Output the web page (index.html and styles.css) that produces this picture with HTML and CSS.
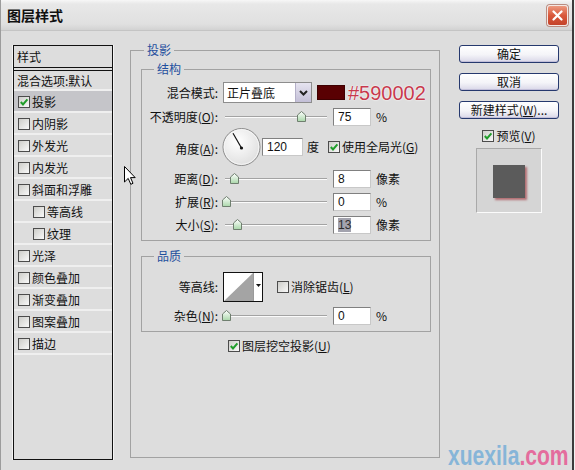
FILE: index.html
```html
<!DOCTYPE html>
<html lang="zh-CN">
<head>
<meta charset="utf-8">
<title>图层样式</title>
<link rel="stylesheet" href="styles.css">
</head>
<body>
<div class="window">
  <div class="titlebar">
    <span class="title">图层样式</span>
    <span class="close">
      <svg width="11" height="11" viewBox="0 0 11 11"><path d="M1.5 1.5 L9.5 9.5 M9.5 1.5 L1.5 9.5" stroke="#fff" stroke-width="2.2" stroke-linecap="round"/></svg>
    </span>
  </div>
  <div class="content">
    <div class="list">
      <div class="list-head">样式</div>
      <div class="list-blend">混合选项:默认</div>
      <div class="item sel"><span class="cb on"><svg viewBox="0 0 10 10"><path d="M1.8 5 L4 7.4 L8.4 2.4" fill="none" stroke="#1f9d2a" stroke-width="2"/></svg></span>投影</div>
      <div class="item"><span class="cb"></span>内阴影</div>
      <div class="item"><span class="cb"></span>外发光</div>
      <div class="item"><span class="cb"></span>内发光</div>
      <div class="item"><span class="cb"></span>斜面和浮雕</div>
      <div class="item sub"><span class="cb"></span>等高线</div>
      <div class="item sub"><span class="cb"></span>纹理</div>
      <div class="item"><span class="cb"></span>光泽</div>
      <div class="item"><span class="cb"></span>颜色叠加</div>
      <div class="item"><span class="cb"></span>渐变叠加</div>
      <div class="item"><span class="cb"></span>图案叠加</div>
      <div class="item"><span class="cb"></span>描边</div>
    </div>

    <fieldset class="group outer">
      <legend>投影</legend>
      <fieldset class="group inner">
        <legend>结构</legend>
        <div class="row r-blend">
          <span class="label">混合模式:</span>
          <div class="select">
            <span class="sel-text">正片叠底</span>
            <span class="sel-btn"><svg width="9" height="6" viewBox="0 0 9 6"><path d="M1 1 L4.5 4.5 L8 1" fill="none" stroke="#222" stroke-width="2"/></svg></span>
          </div>
          <span class="swatch"></span>
          <span class="hex">#590002</span>
        </div>
        <div class="row r-std">
          <span class="label">不透明度(<u>O</u>):</span>
          <div class="slider"><span class="thumb" style="left:75px"><svg width="9" height="11" viewBox="0 0 9 11"><defs><linearGradient id="tg1" x1="0" y1="0" x2="0" y2="1"><stop offset="0" stop-color="#ffffff"/><stop offset="1" stop-color="#a9d7a9"/></linearGradient></defs><path d="M4.5 0.5 L8.5 4 L8.5 10.5 L0.5 10.5 L0.5 4 Z" fill="url(#tg1)" stroke="#6f7f6f"/></svg></span></div>
          <span class="input">75</span>
          <span class="unit">%</span>
        </div>
        <div class="row r-angle">
          <span class="label">角度(<u>A</u>):</span>
          <span class="dial">
            <svg width="39" height="40" viewBox="0 0 39 40"><defs><radialGradient id="dg" cx="0.4" cy="0.35" r="0.7"><stop offset="0" stop-color="#ffffff"/><stop offset="1" stop-color="#dedede"/></radialGradient></defs><circle cx="19.5" cy="20" r="18.5" fill="url(#dg)" stroke="#8c8c8c"/><circle cx="19.5" cy="20" r="17.3" fill="none" stroke="#f6f6f6"/><path d="M19.5 21 L11 6.3" stroke="#111" stroke-width="1.2"/><circle cx="19.5" cy="21" r="1.6" fill="#111"/></svg>
          </span>
          <span class="input wide">120</span>
          <span class="unit deg">度</span>
          <span class="check global"><span class="cb on"><svg viewBox="0 0 10 10"><path d="M1.8 5 L4 7.4 L8.4 2.4" fill="none" stroke="#1f9d2a" stroke-width="2"/></svg></span>使用全局光(<u>G</u>)</span>
        </div>
        <div class="row r-std gap4">
          <span class="label">距离(<u>D</u>):</span>
          <div class="slider"><span class="thumb" style="left:8px"><svg width="9" height="11" viewBox="0 0 9 11"><path d="M4.5 0.5 L8.5 4 L8.5 10.5 L0.5 10.5 L0.5 4 Z" fill="url(#tg1)" stroke="#6f7f6f"/></svg></span></div>
          <span class="input">8</span>
          <span class="unit">像素</span>
        </div>
        <div class="row r-std">
          <span class="label">扩展(<u>R</u>):</span>
          <div class="slider"><span class="thumb" style="left:0px"><svg width="9" height="11" viewBox="0 0 9 11"><path d="M4.5 0.5 L8.5 4 L8.5 10.5 L0.5 10.5 L0.5 4 Z" fill="url(#tg1)" stroke="#6f7f6f"/></svg></span></div>
          <span class="input">0</span>
          <span class="unit">%</span>
        </div>
        <div class="row r-std">
          <span class="label">大小(<u>S</u>):</span>
          <div class="slider"><span class="thumb" style="left:11px"><svg width="9" height="11" viewBox="0 0 9 11"><path d="M4.5 0.5 L8.5 4 L8.5 10.5 L0.5 10.5 L0.5 4 Z" fill="url(#tg1)" stroke="#6f7f6f"/></svg></span></div>
          <span class="input"><span class="hl">13</span></span>
          <span class="unit">像素</span>
        </div>
      </fieldset>

      <fieldset class="group inner quality">
        <legend>品质</legend>
        <div class="row r-contour">
          <span class="label">等高线:</span>
          <span class="contour">
            <svg class="curve" width="29" height="28" viewBox="0 0 29 28"><polygon points="0,28 29,0 29,28" fill="#a4a4a4"/></svg>
            <span class="contour-btn"><svg width="5" height="3" viewBox="0 0 5 3"><polygon points="0,0 5,0 2.5,3" fill="#111"/></svg></span>
          </span>
          <span class="check anti"><span class="cb"></span>消除锯齿(<u>L</u>)</span>
        </div>
        <div class="row r-std">
          <span class="label">杂色(<u>N</u>):</span>
          <div class="slider"><span class="thumb" style="left:0px"><svg width="9" height="11" viewBox="0 0 9 11"><path d="M4.5 0.5 L8.5 4 L8.5 10.5 L0.5 10.5 L0.5 4 Z" fill="url(#tg1)" stroke="#6f7f6f"/></svg></span></div>
          <span class="input">0</span>
          <span class="unit">%</span>
        </div>
      </fieldset>

      <div class="knockout"><span class="check"><span class="cb on"><svg viewBox="0 0 10 10"><path d="M1.8 5 L4 7.4 L8.4 2.4" fill="none" stroke="#1f9d2a" stroke-width="2"/></svg></span>图层挖空投影(<u>U</u>)</span></div>
    </fieldset>

    <div class="side">
      <div class="btn">确定</div>
      <div class="btn">取消</div>
      <div class="btn">新建样式(<u>W</u>)...</div>
      <span class="check preview-check"><span class="cb on"><svg viewBox="0 0 10 10"><path d="M1.8 5 L4 7.4 L8.4 2.4" fill="none" stroke="#1f9d2a" stroke-width="2"/></svg></span>预览(<u>V</u>)</span>
      <div class="preview"><span class="preview-square"></span></div>
    </div>
  </div>
</div>

<svg class="cursor" width="12" height="19" viewBox="0 0 12 19"><path d="M0.5 0.5 L0.5 16 L4.2 12.4 L6.8 18.3 L9 17.3 L6.5 11.6 L11.2 11.6 Z" fill="#fff" stroke="#000"/></svg>
<div class="watermark"><span class="wm-a">xuexila</span><span class="wm-b">.com</span></div>
</body>
</html>
```

FILE: styles.css
```css
* { box-sizing: border-box; }
html, body { margin: 0; padding: 0; }
body {
  width: 575px;
  height: 470px;
  overflow: hidden;
  position: relative;
  background: #f2f2f2;
  font-family: "Noto Sans CJK SC", "Liberation Sans", sans-serif;
  font-size: 12px;
  line-height: 14px;
  color: #111;
}
u { text-decoration: underline; text-underline-offset: 1px; }

.window {
  width: 574px;
  height: 470px;
  background: #dddddd;
  border-left: 1px solid #9c9c9c;
  border-right: 2px solid #3c3c3c;
}

.titlebar {
  height: 31px;
  display: flex;
  align-items: center;
  justify-content: space-between;
  padding: 0 4px 0 6px;
  background: linear-gradient(#f7f7f7 0, #e8e8e8 4px, #e0e0e0 24px, #d2d2d2 30px);
  border-bottom: 1px solid #c4c4c4;
}
.title {
  font-size: 14px;
  font-weight: 700;
  line-height: 16px;
}
.close {
  width: 21px;
  height: 21px;
  border-radius: 3px;
  border: 1px solid #f4e8e4;
  background: linear-gradient(#ec9a80, #d9583b 50%, #c4432a);
  display: flex;
  align-items: center;
  justify-content: center;
  box-shadow: 0 0 0 1px #b98c80;
}

.content {
  display: flex;
  align-items: flex-start;
}

/* left list */
.list {
  margin: 14px 0 0 12px;
  width: 100px;
  height: 415px;
  border: 1px solid #111;
  background: #dddddd;
  box-shadow: -1px 0 0 #f4f4f4, 1px 0 0 #f4f4f4;
}
.list-head {
  height: 22px;
  padding-left: 3px;
  display: flex;
  align-items: center;
  border-bottom: 1px solid #111;
}
.list-blend {
  margin-top: 2px;
  height: 21px;
  padding: 1px 0 0 3px;
  display: flex;
  align-items: center;
  border-top: 1px solid #111;
  border-bottom: 2px solid #efefef;
}
.item {
  height: 22px;
  display: flex;
  align-items: center;
  padding: 1px 0 0 4px;
  border-bottom: 2px solid #efefef;
}
.item.sel { background: #c5c5c9; }
.item.sub { padding-left: 19px; }

.cb {
  width: 12px;
  height: 12px;
  flex: none;
  margin-right: 2px;
  border: 1px solid #4c4c4c;
  background: linear-gradient(135deg, #cdcdc9, #f9f9f9);
  display: inline-flex;
  align-items: center;
  justify-content: center;
}
.cb svg { width: 10px; height: 10px; display: block; }

.check {
  display: flex;
  align-items: center;
}

/* group boxes */
.group {
  margin: 0;
  border: 1px solid #a2a2a2;
  min-width: 0;
}
.group > legend {
  padding: 0 3px;
  line-height: 16px;
  color: #1f4f9e;
}
.outer {
  margin: 11px 0 0 17px;
  width: 310px;
  height: 416px;
  padding: 3px 8px 0 10px;
}
.outer > legend { margin-left: 3px; }
.inner {
  width: 290px;
  padding: 5px 0 6px 0;
}
.inner > legend { margin-left: 12px; }
.quality {
  margin-top: 7px;
  padding: 8px 0 6px 0;
}

.row {
  display: flex;
  align-items: center;
}
.label {
  width: 76px;
  flex: none;
  text-align: right;
  white-space: nowrap;
}
.r-blend { height: 21px; }
.r-std { height: 18px; margin-top: 5px; }
.r-std.gap4 { margin-top: 3px; }
.r-angle { height: 40px; margin-top: 1px; }
.r-angle .label { padding-top: 3px; }
.r-contour { height: 30px; }

.select {
  margin-left: 5px;
  width: 89px;
  height: 21px;
  border: 1px solid #8d8d8d;
  background: #fff;
  display: flex;
  align-items: center;
}
.sel-text { padding-left: 3px; }
.sel-btn {
  margin-left: auto;
  width: 16px;
  height: 19px;
  border-left: 1px solid #b4b0c8;
  background: linear-gradient(#e6e4f0, #c3bfd7);
  display: flex;
  align-items: center;
  justify-content: center;
}
.swatch {
  margin-left: 5px;
  width: 28px;
  height: 15px;
  background: #590002;
  box-shadow: inset 0 0 0 1px #3e0001;
}
.hex {
  margin-left: 3px;
  font-family: "Liberation Sans", Arial, sans-serif;
  font-size: 20px;
  line-height: 20px;
  color: #c7394d;
  text-shadow: 0 0 2px #fff, 0 0 1px #fff;
}

.slider {
  position: relative;
  width: 106px;
  height: 18px;
  margin-left: 4px;
  flex: none;
  background:
    linear-gradient(#a3a3a3, #a3a3a3) 3px 8px / 102px 1px no-repeat,
    linear-gradient(#fbfbfb, #fbfbfb) 3px 9px / 102px 1px no-repeat;
}
.thumb {
  position: absolute;
  top: 3px;
  width: 9px;
  height: 11px;
}
.thumb svg { display: block; }

.input {
  margin-left: 5px;
  width: 38px;
  height: 18px;
  flex: none;
  border: 1px solid #808080;
  border-right-color: #c8c8c8;
  border-bottom-color: #c8c8c8;
  background: #fff;
  font-family: "Liberation Sans", Arial, sans-serif;
  font-size: 12px;
  padding-left: 4px;
  display: flex;
  align-items: center;
}
.input.wide { margin-left: 1px; width: 41px; }
.hl { background: #a3a3ae; color: #2e2e2e; }
.unit { margin-left: 5px; }
.unit.deg { margin-left: 4px; }

.dial {
  margin-left: 4px;
  width: 39px;
  height: 40px;
  flex: none;
}
.dial svg { display: block; }
.global { margin-left: 9px; }

.contour {
  margin-left: 5px;
  width: 40px;
  height: 30px;
  flex: none;
  border: 1px solid #111;
  background: #fff;
  display: flex;
}
.curve { display: block; }
.contour-btn {
  width: 9px;
  border-left: 1px solid #9a9a9a;
  display: flex;
  justify-content: center;
  padding-top: 11px;
}
.contour-btn svg { display: block; }
.anti { margin-left: 14px; }

.knockout {
  margin-top: 7px;
  height: 14px;
  padding-left: 87px;
  display: flex;
  align-items: center;
}

/* right side */
.side {
  margin: 14px 0 0 19px;
  width: 100px;
  display: flex;
  flex-direction: column;
  align-items: center;
}
.btn {
  width: 100px;
  height: 18px;
  margin-bottom: 10px;
  border: 1px solid #26396e;
  border-radius: 3px;
  background: linear-gradient(#ffffff, #f4f4f8 55%, #d9d7e8);
  box-shadow: inset 0 -1px 0 #c2bfd9;
  display: flex;
  align-items: center;
  justify-content: center;
  white-space: nowrap;
}
.preview-check { height: 13px; }
.preview {
  margin-top: 6px;
  width: 66px;
  height: 65px;
  background: #d5d5d5;
  border: 1px solid;
  border-color: #a9a9a9 #fbfbfb #fbfbfb #a9a9a9;
  display: flex;
  align-items: center;
  justify-content: center;
}
.preview-square {
  width: 32px;
  height: 33px;
  margin-top: 2px;
  background: #5b5b5b;
  box-shadow: 2px 2px 2px rgba(150, 25, 35, 0.55);
}

/* overlays */
.cursor {
  position: absolute;
  left: 124px;
  top: 166px;
}
.watermark {
  position: absolute;
  right: 6px;
  bottom: 0px;
  font-family: "Liberation Sans", Arial, sans-serif;
  font-weight: 700;
  font-size: 27px;
  line-height: 27px;
  transform: scaleX(0.78);
  transform-origin: right bottom;
  white-space: nowrap;
}
.wm-a { color: #86b5d8; }
.wm-b { color: #e46d9d; }
```
